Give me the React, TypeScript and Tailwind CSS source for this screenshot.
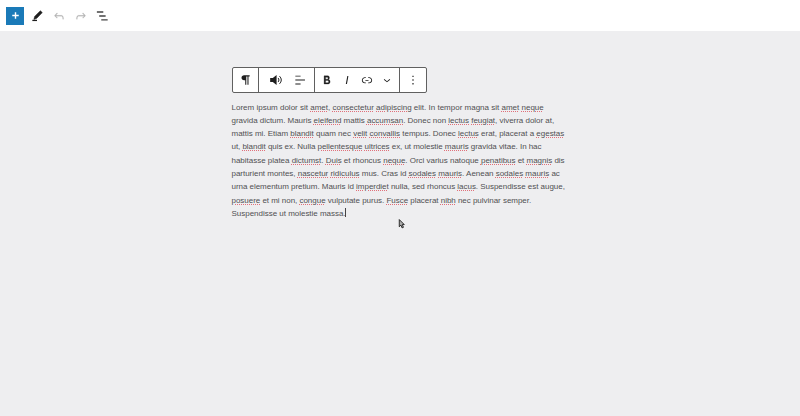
import type { ReactNode } from "react";

type Line = { text: string; spacing: number };

// Words between underscores are flagged by the spell checker.
const lines: Line[] = [
  { text: "Lorem ipsum dolor sit _amet_, _consectetur_ _adipiscing_ elit. In tempor magna sit _amet_ _neque_", spacing: 0 },
  { text: "gravida dictum. Mauris _eleifend_ mattis _accumsan_. Donec non _lectus_ _feugiat_, viverra dolor at,", spacing: -0.027 },
  { text: "mattis mi. Etiam _blandit_ quam nec _velit_ _convallis_ tempus. Donec _lectus_ erat, placerat a _egestas_", spacing: -0.018 },
  { text: "ut, _blandit_ quis ex. Nulla _pellentesque_ _ultrices_ ex, ut molestie _mauris_ gravida vitae. In hac", spacing: -0.043 },
  { text: "habitasse platea _dictumst_. _Duis_ et rhoncus _neque_. Orci varius natoque _penatibus_ et _magnis_ dis", spacing: -0.02 },
  { text: "parturient montes, _nascetur_ _ridiculus_ mus. Cras id _sodales_ _mauris_. Aenean _sodales_ _mauris_ ac", spacing: -0.024 },
  { text: "urna elementum pretium. Mauris id _imperdiet_ nulla, sed rhoncus _lacus_. Suspendisse est augue,", spacing: -0.036 },
  { text: "_posuere_ et mi non, _congue_ vulputate purus. _Fusce_ placerat _nibh_ nec pulvinar semper.", spacing: -0.028 },
  { text: "Suspendisse ut molestie massa.", spacing: -0.02 },
];

function TextLine({ text, spacing }: Line) {
  return (
    <span className="block whitespace-nowrap" style={{ letterSpacing: `${spacing}px` }}>
      {text.split("_").map((part, i) =>
        i % 2 ? (
          <span key={i} className="underline decoration-dotted decoration-[#e0707a] decoration-[1px] underline-offset-[1px]">
            {part}
          </span>
        ) : (
          part
        ),
      )}
    </span>
  );
}

function Icon({ children, className = "" }: { children: ReactNode; className?: string }) {
  return (
    <svg viewBox="0 0 24 24" className={`shrink-0 ${className || "size-[13px]"}`} fill="currentColor">
      {children}
    </svg>
  );
}

const undoPath =
  "M18.3 11.7c-.6-.6-1.4-.9-2.3-.9H6.7l2.9-3.3-1.1-1-4.5 5L8.5 16l1-1-2.7-2.7H16c.5 0 .9.2 1.3.5 1 1 1 3.4 1 4.5v.3h1.5v-.2c0-1.5 0-4.3-1.5-5.7z";

export default function App() {
  return (
    <div className="h-[416px] w-[800px] overflow-hidden bg-[#eeeef0] font-['Liberation_Sans',Arial,sans-serif]">
      <header className="flex h-[31px] items-center bg-white pl-[6px] text-[#1e1e1e]">
        <button className="flex size-[18px] items-center justify-center bg-[#1a7ab8] text-white">
          <Icon><path d="M10.700 6h2.600v4.700H18v2.600h-4.700V18h-2.600v-4.700H6v-2.600h4.700z" /></Icon>
        </button>
        <div className="ml-[6px] flex items-center gap-[8px]">
          <Icon className="size-[14px]">
            <path d="M17.800 3.200 21 6.200 11.500 16l-4.800 1.800L8 12.800z" stroke="currentColor" strokeWidth="1" strokeLinejoin="round" />
            <path d="M4 18.500h8v2.200H4z" />
          </Icon>
          <Icon className="size-[14px] text-[#b4b4b4]"><path stroke="currentColor" strokeWidth=".3" d={undoPath} /></Icon>
          <Icon className="size-[14px] text-[#b4b4b4]"><path stroke="currentColor" strokeWidth=".3" transform="translate(24 0) scale(-1 1)" d={undoPath} /></Icon>
          <Icon className="size-[14px] text-[#444]"><path d="M1.500 4h11v2.400h-11zM5.500 10.700h11v2.400h-11zM9 17.400h11v2.400H9z" /></Icon>
        </div>
      </header>

      <main className="ml-[231.5px] pt-[36px]">
        <div className="flex h-[26px] w-[195px] rounded-[2px] border border-[#606060] bg-white text-[#1e1e1e]">
          <div className="flex w-[26.500px] items-center justify-center border-r border-[#606060]">
            <Icon className="size-[14px]"><path d="M10.500 4H20v1.800h-2V20h-1.800V5.800h-2V20h-1.800v-7.500h-1.900C7.900 12.500 6 10.700 6 8.300S7.900 4 10.500 4z" /></Icon>
          </div>
          <div className="flex w-[56px] items-center justify-center gap-[10px] border-r border-[#606060] pl-[3px]">
            <Icon className="size-[14px]">
              <path d="M2 8.500h4.500L13 3.500v17l-6.500-5H2z" />
              <path d="M15.500 8.500c2 2 2 5 0 7M18 5.500c4 4 4 9 0 13" fill="none" stroke="currentColor" strokeWidth="1.700" />
            </Icon>
            <Icon className="size-[14px]"><path d="M4 4.500h9v1.600H4zM4 11.200h16.500v1.600H4zM4 18h9v1.600H4z" /></Icon>
          </div>
          <div className="flex w-[85px] items-center justify-center gap-[6px] border-r border-[#606060]">
            <Icon className="size-[14px]"><path stroke="currentColor" strokeWidth=".5" d="M14.7 11.3c1-.6 1.5-1.6 1.5-3 0-2.3-1.3-3.4-4-3.4H7v14h5.8c1.4 0 2.5-.3 3.3-1 .8-.7 1.2-1.7 1.2-2.900.1-1.900-.8-3.100-2.600-3.700zm-5.100-4h2.300c.6 0 1.100.1 1.400.4.3.3.5.7.5 1.200s-.2 1-.5 1.200c-.3.3-.8.4-1.400.4H9.600V7.300zm4.600 9c-.4.3-1 .4-1.700.4H9.600v-3.900h2.900c.7 0 1.300.2 1.700.5.4.3.6.8.6 1.500s-.2 1.200-.6 1.500z" /></Icon>
            <Icon className="size-[14px]"><path d="M12.500 5L10 19h1.900l2.500-14z" /></Icon>
            <Icon className="size-[14px]"><path d="M15.600 7.200H14v1.500h1.600c2 0 3.700 1.700 3.700 3.700s-1.700 3.700-3.700 3.700H14v1.500h1.600c2.800 0 5.200-2.300 5.200-5.200 0-2.900-2.300-5.200-5.200-5.200zM4.700 12.400c0-2 1.700-3.700 3.700-3.700H10V7.200H8.400c-2.900 0-5.200 2.300-5.200 5.200 0 2.900 2.300 5.200 5.200 5.200H10v-1.500H8.400c-2 0-3.700-1.700-3.700-3.700zm4.600.9h5.300v-1.500H9.300v1.500z" /></Icon>
            <Icon className="size-[14px]"><path d="M17.500 11.600L12 16l-5.500-4.400.9-1.200L12 14l4.500-3.600 1 1.200z" /></Icon>
          </div>
          <div className="flex flex-1 items-center justify-center">
            <Icon className="size-[14px]"><path d="M11 4.500h2V7h-2zM11 10.800h2v2.500h-2zM11 17h2v2.500h-2z" /></Icon>
          </div>
        </div>

        <p className="mt-[7.5px] text-[8px] leading-[13.3px] text-[#505052]">
          {lines.map((line) => (
            <TextLine key={line.text} {...line} />
          ))}
        </p>
      </main>

      <div className="absolute top-[208px] left-[345px] h-[9px] w-px bg-[#444]" />
      <svg viewBox="0 0 12 18" className="absolute top-[219px] left-[398px] h-[10px] w-[7px]">
        <path d="M2 1v13l3-3 2 5 2.500-1-2-5H11z" fill="#aaa" stroke="#111" strokeWidth="1.500" />
      </svg>
    </div>
  );
}
